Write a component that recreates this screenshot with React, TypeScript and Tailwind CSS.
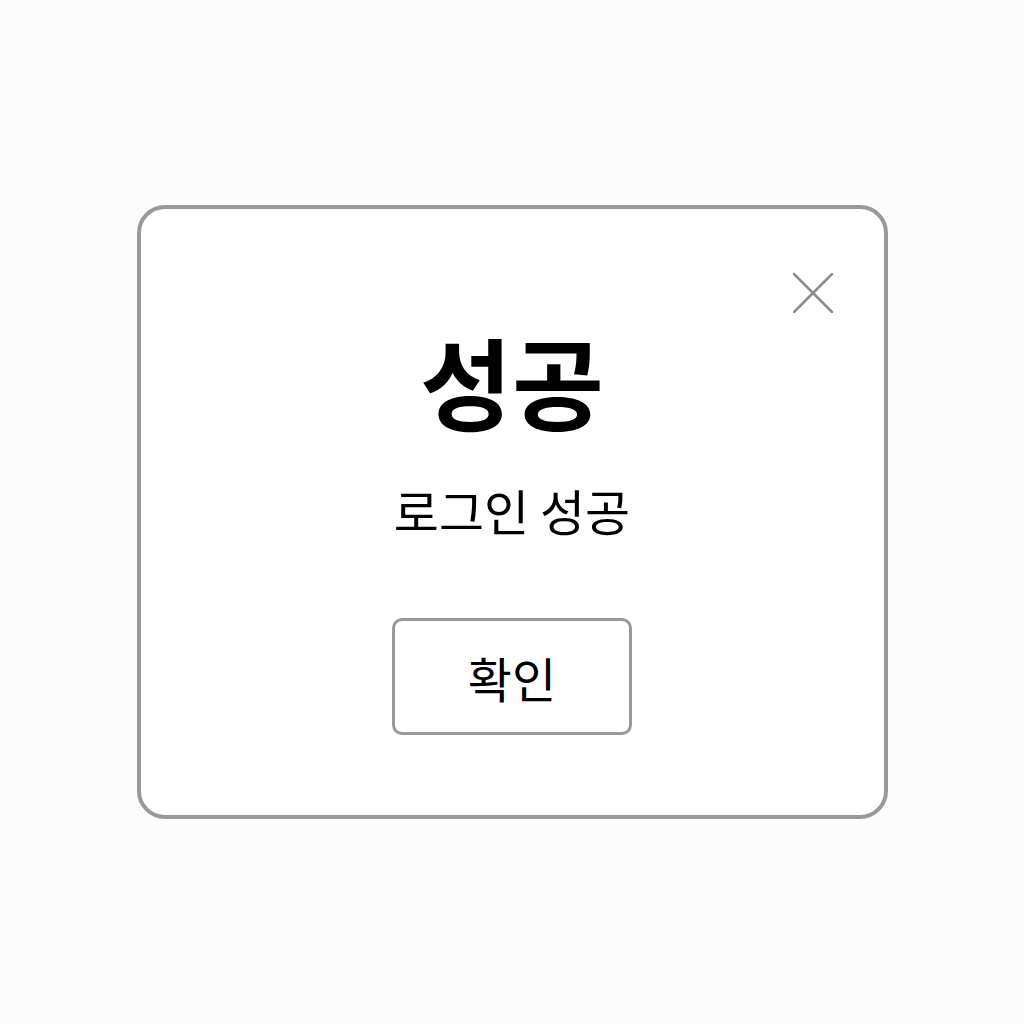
import React from "react";

const font = { fontFamily: '"Noto Sans CJK KR", "Noto Sans", sans-serif' };

const CloseIcon = () => (
   <svg viewBox="0 0 40 40" className="size-10" fill="none" stroke="#8c8c8c" strokeWidth="2.5" strokeLinecap="round">
      <path d="M1 1 L39 39 M39 1 L1 39" />
   </svg>
);

export default function App() {
   return (
      <div className="flex h-[1024px] w-full items-center justify-center bg-[#fcfcfc]" style={font}>
         <div className="relative flex h-[614px] w-[751px] flex-col items-center rounded-[28px] border-4 border-[#999999] bg-white pt-[121px]">
            <button className="absolute right-[51px] top-[64px]">
               <CloseIcon />
            </button>
            <h1 className="text-[100px] font-bold leading-none text-black">성공</h1>
            <p className="mt-[55px] text-[49px] leading-none text-black">로그인 성공</p>
            <button className="mt-[84px] flex h-[117px] w-[240px] items-center justify-center rounded-[10px] border-[3px] border-[#999999] bg-white text-[48px] leading-none text-black">
               확인
            </button>
         </div>
      </div>
   );
}
